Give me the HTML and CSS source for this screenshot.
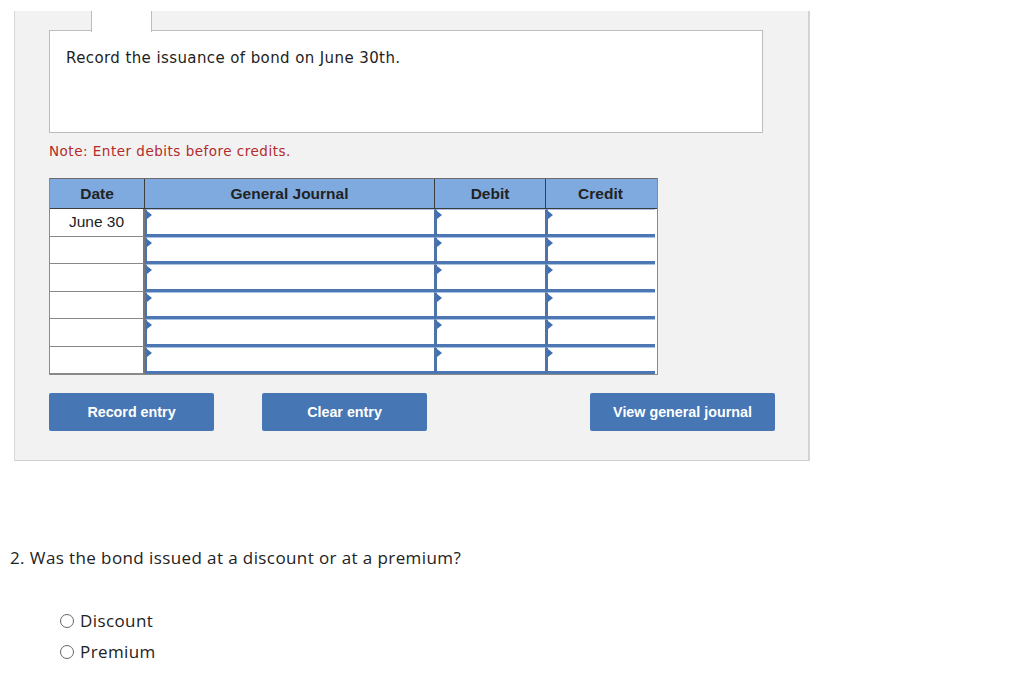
FILE: index.html
```html
<!DOCTYPE html>
<html>
<head>
<meta charset="utf-8">
<link rel="stylesheet" href="styles.css">
</head>
<body>
<div class="panel">
  <div class="question-box">
    <div class="tab-notch"></div>
    <p class="prompt">Record the issuance of bond on June 30th.</p>
  </div>
  <p class="note">Note: Enter debits before credits.</p>
  <div class="journal">
    <div class="row head">
      <div class="c date">Date</div>
      <div class="c gj">General Journal</div>
      <div class="c amt">Debit</div>
      <div class="c amt last">Credit</div>
    </div>
    <div class="row">
      <div class="c date cell">June 30</div>
      <div class="c gj in"><span class="tri"></span></div>
      <div class="c amt in"><span class="tri"></span></div>
      <div class="c amt last in"><span class="tri"></span></div>
    </div>
    <div class="row">
      <div class="c date cell"></div>
      <div class="c gj in"><span class="tri"></span></div>
      <div class="c amt in"><span class="tri"></span></div>
      <div class="c amt last in"><span class="tri"></span></div>
    </div>
    <div class="row">
      <div class="c date cell"></div>
      <div class="c gj in"><span class="tri"></span></div>
      <div class="c amt in"><span class="tri"></span></div>
      <div class="c amt last in"><span class="tri"></span></div>
    </div>
    <div class="row">
      <div class="c date cell"></div>
      <div class="c gj in"><span class="tri"></span></div>
      <div class="c amt in"><span class="tri"></span></div>
      <div class="c amt last in"><span class="tri"></span></div>
    </div>
    <div class="row">
      <div class="c date cell"></div>
      <div class="c gj in"><span class="tri"></span></div>
      <div class="c amt in"><span class="tri"></span></div>
      <div class="c amt last in"><span class="tri"></span></div>
    </div>
    <div class="row">
      <div class="c date cell"></div>
      <div class="c gj in"><span class="tri"></span></div>
      <div class="c amt in"><span class="tri"></span></div>
      <div class="c amt last in"><span class="tri"></span></div>
    </div>
  </div>
  <div class="buttons">
    <button class="btn b1">Record entry</button>
    <button class="btn b2">Clear entry</button>
    <button class="btn b3">View general journal</button>
  </div>
</div>

<p class="q2">2. Was the bond issued at a discount or at a premium?</p>
<div class="options">
  <label class="opt"><span class="radio"></span>Discount</label>
  <label class="opt"><span class="radio"></span>Premium</label>
</div>
</body>
</html>
```

FILE: styles.css
```css
html, body {
  margin: 0;
  padding: 0;
  background: #ffffff;
}
body {
  font-family: Verdana, "DejaVu Sans", "Open Sans", sans-serif;
  color: #222;
}
.panel {
  margin: 11px 0 0 14px;
  width: 796px;
  height: 450px;
  box-sizing: border-box;
  background: #f2f2f2;
  border-left: 1px solid #d8d8d8;
  border-right: 2px solid #d4d4d4;
  border-bottom: 1px solid #cfcfcf;
  padding: 19px 0 0 34px;
}
.question-box {
  position: relative;
  width: 714px;
  height: 103px;
  box-sizing: border-box;
  background: #fff;
  border: 1px solid #bdbdbd;
  padding: 18px 0 0 16px;
}
.tab-notch {
  position: absolute;
  left: 41px;
  top: -20px;
  width: 59px;
  height: 21px;
  background: #fff;
  border-left: 1px solid #bdbdbd;
  border-right: 1px solid #bdbdbd;
}
.prompt {
  margin: 0;
  font-family: Verdana, "DejaVu Sans", "Open Sans", sans-serif;
  font-size: 15px;
  letter-spacing: 0.4px;
  line-height: 18px;
  color: #1e1e1e;
}
.note {
  margin: 9px 0 0 0;
  font-family: Verdana, "DejaVu Sans", "Open Sans", sans-serif;
  font-size: 13.5px;
  letter-spacing: 0.5px;
  line-height: 18px;
  color: #b22a2a;
}
.journal {
  margin-top: 18px;
  width: 607px;
  border: 1px solid #8a8a8a;
  border-top-color: #6c6c6c;
  background: #fff;
  font-family: "Liberation Sans", Arial, sans-serif;
}
.row {
  display: flex;
  height: 27.5px;
}
.row.head {
  height: 29px;
  background: #7eaadf;
  border-bottom: 1px solid #3c3c3c;
}
.c {
  box-sizing: border-box;
  border-right: 1px solid #3e3e3e;
  display: flex;
  align-items: center;
  justify-content: center;
  font-size: 15.5px;
}
.c.last { border-right: none; }
.head .c {
  font-weight: bold;
  color: #222;
  font-size: 15.5px;
}
.date { width: 95px; }
.gj { width: 290px; }
.amt { width: 111px; }
.amt.last { width: 109px; }
.cell {
  border-right: 2px solid #777;
  border-bottom: 1px solid #888;
  color: #222;
  font-size: 15.5px;
}
.in {
  position: relative;
  border: none;
  border-left: 2px solid #4d73a8;
  border-bottom: 3px solid #4d77b3;
  border-top: 1px solid #a9c2e4;
  border-right: 1px solid #4d73a8;
  background: #fff;
}
.tri {
  position: absolute;
  left: 0;
  top: 1px;
  width: 0;
  height: 0;
  border-top: 4px solid transparent;
  border-bottom: 4px solid transparent;
  border-left: 5px solid #3e6fb6;
}
.buttons {
  display: flex;
  margin-top: 18px;
  width: 726px;
}
.btn {
  height: 38px;
  border: none;
  border-radius: 2px;
  background: #4676b4;
  color: #fff;
  font-family: "Liberation Sans", Arial, sans-serif;
  font-weight: bold;
  font-size: 14.3px;
  padding: 0;
}
.b1 { width: 165px; }
.b2 { width: 165px; margin-left: 48px; }
.b3 { width: 185px; margin-left: auto; }
.q2 {
  margin: 86px 0 0 10px;
  font-family: "Open Sans", Lato, sans-serif;
  font-size: 17px;
  letter-spacing: 0.4px;
  line-height: 22px;
  color: #222;
}
.options {
  margin: 41px 0 0 60px;
  display: flex;
  flex-direction: column;
  gap: 9px;
}
.opt {
  display: flex;
  align-items: center;
  font-family: "Open Sans", Lato, sans-serif;
  font-size: 17px;
  letter-spacing: 0.4px;
  line-height: 22px;
  color: #222;
}
.radio {
  width: 14px;
  height: 14px;
  border: 1px solid #666;
  border-radius: 50%;
  box-sizing: border-box;
  margin-right: 6px;
  background: #fff;
}
```
